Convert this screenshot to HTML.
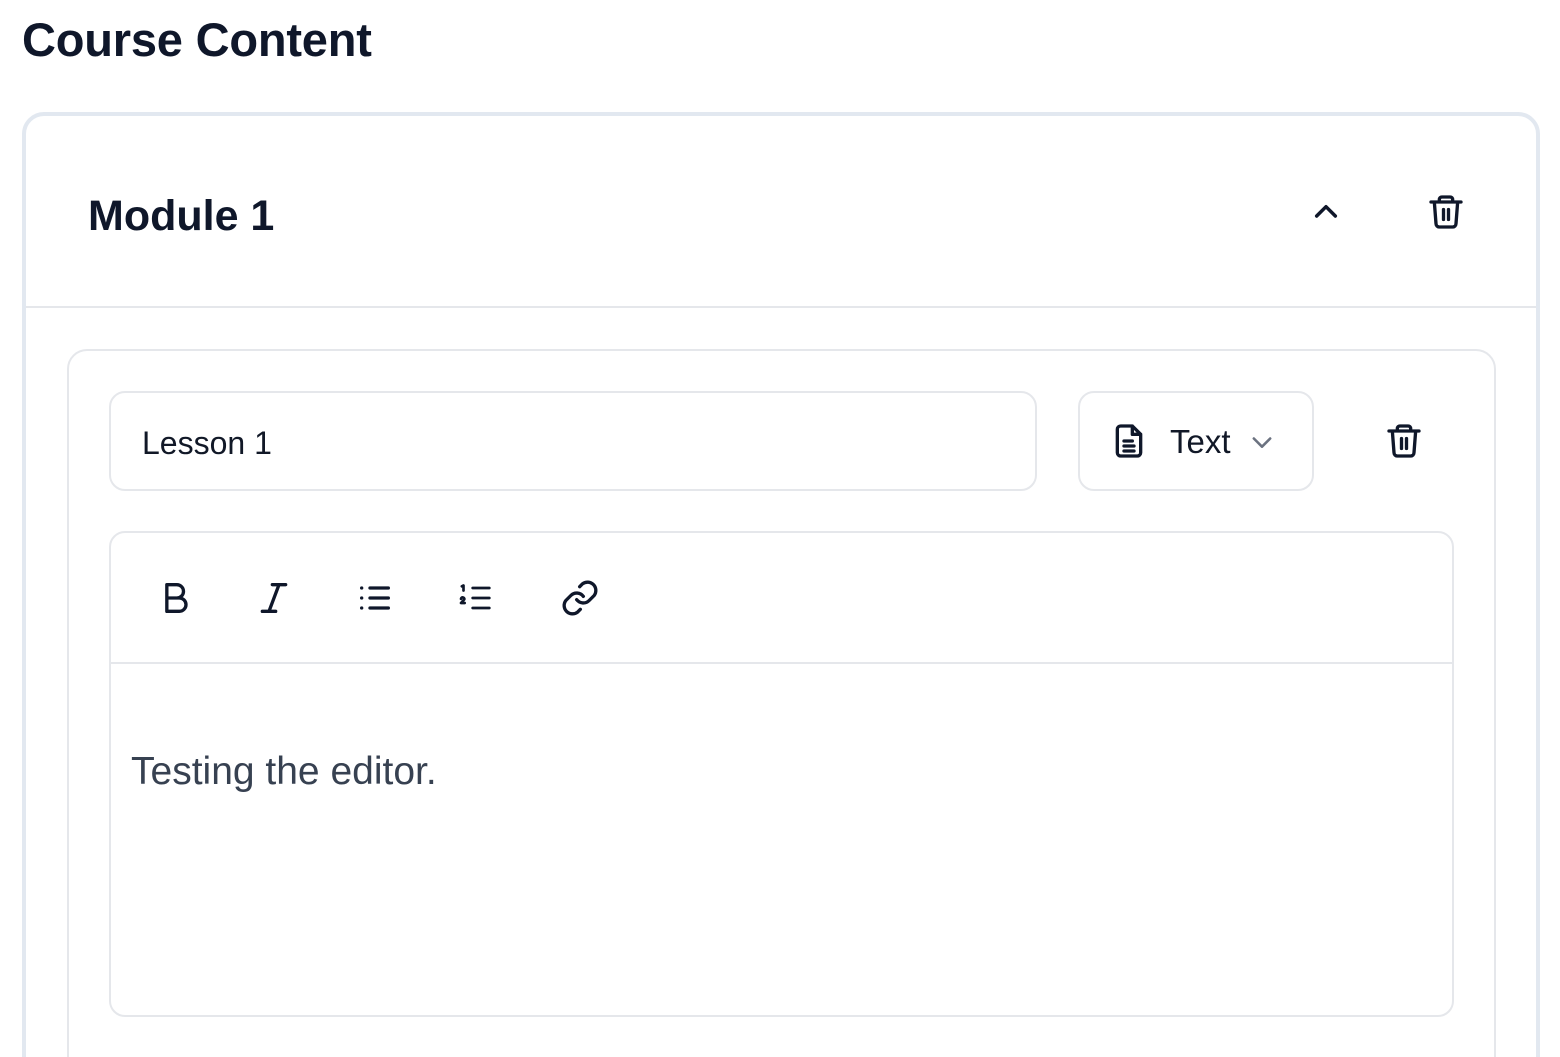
<!DOCTYPE html>
<html><head><meta charset="utf-8"><style>
*{box-sizing:border-box;margin:0;padding:0}
html,body{width:1560px;height:1057px;overflow:hidden}
body{background:#fff;font-family:"Liberation Sans",sans-serif;color:#0f172a;position:relative}
#wrap{position:absolute;left:0;top:0;width:1560px;height:1057px;overflow:hidden}
.abs{position:absolute}
h1{position:absolute;left:22px;top:12px;font-size:47px;font-weight:600;letter-spacing:-0.2px;line-height:56px}
.outer{left:22px;top:112px;width:1518px;height:1000px;border:4px solid #e2e8f0;border-radius:22px}
.mod{left:88px;top:190px;font-size:43px;font-weight:600;line-height:52px}
.div1{left:26px;top:306px;width:1510px;height:2px;background:#e5e7eb}
.lesson{left:67px;top:349px;width:1429px;height:760px;border:2px solid #e5e7eb;border-radius:20px}
.input{left:109px;top:391px;width:928px;height:100px;border:2px solid #e5e7eb;border-radius:16px;font-size:32px;line-height:100px;padding-left:31px;color:#111827}
.sel{left:1078px;top:391px;width:236px;height:100px;border:2px solid #e5e7eb;border-radius:16px}
.editor{left:109px;top:531px;width:1345px;height:486px;border:2px solid #e5e7eb;border-radius:16px}
.div2{left:111px;top:662px;width:1341px;height:2px;background:#e5e7eb}
.txt{left:131px;top:748px;font-size:39px;color:#374151;line-height:48px}
svg{position:absolute;fill:none;stroke:#0f172a;stroke-linecap:round;stroke-linejoin:round}
</style></head><body><div id="wrap">
<h1>Course Content</h1>
<div class="abs outer"></div>
<div class="abs mod">Module 1</div>
<svg style="left:1310px;top:196px" width="32" height="32" viewBox="0 0 24 24" stroke-width="2.6"><path d="M5 15l7-7 7 7"/></svg>
<svg style="left:1426px;top:192px" width="40" height="40" viewBox="0 0 24 24" stroke-width="2"><path d="M3 6h18M8 6V4.5A1.5 1.5 0 0 1 9.5 3h5A1.5 1.5 0 0 1 16 4.5V6M5 6l1 13a2 2 0 0 0 2 2h8a2 2 0 0 0 2-2l1-13M10.5 10.5v6M13.5 10.5v6"/></svg>
<div class="abs div1"></div>
<div class="abs lesson"></div>
<div class="abs input">Lesson 1</div>
<div class="abs sel"></div>
<svg style="left:1109px;top:421px" width="40" height="40" viewBox="0 0 24 24" stroke-width="2"><path d="M14 3H7a2 2 0 0 0-2 2v14a2 2 0 0 0 2 2h10a2 2 0 0 0 2-2V8z M14 3v5h5 M9 12h5 M9 15h6 M9 18h6"/></svg>
<div class="abs" style="left:1170px;top:420px;font-size:33px;line-height:44px;color:#111827">Text</div>
<svg style="left:1248px;top:428px" width="28" height="28" viewBox="0 0 24 24" stroke="#6b7280" stroke-width="2.2"><path d="M5 9l7 7 7-7" stroke="#6b7280"/></svg>
<svg style="left:1384px;top:421px" width="40" height="40" viewBox="0 0 24 24" stroke-width="2"><path d="M3 6h18M8 6V4.5A1.5 1.5 0 0 1 9.5 3h5A1.5 1.5 0 0 1 16 4.5V6M5 6l1 13a2 2 0 0 0 2 2h8a2 2 0 0 0 2-2l1-13M10.5 10.5v6M13.5 10.5v6"/></svg>
<div class="abs editor"></div>
<div class="abs div2"></div>
<svg style="left:156px;top:578px" width="40" height="40" viewBox="0 0 24 24" stroke-width="2"><path d="M6.5 4h6a4 4 0 0 1 0 8h-6zM6.5 12h7.5a4 4 0 0 1 0 8H6.5z"/></svg>
<svg style="left:254px;top:578px" width="40" height="40" viewBox="0 0 24 24" stroke-width="2"><path d="M11 4h8M5 20h8M15 4L9 20"/></svg>
<svg style="left:355px;top:578px" width="40" height="40" viewBox="0 0 24 24" stroke-width="2"><path d="M9 6h11M9 12h11M9 18h11M4 6h.01M4 12h.01M4 18h.01"/></svg>
<svg style="left:456px;top:578px" width="40" height="40" viewBox="0 0 24 24" stroke-width="2"><path d="M10 6h10M10 12h10M10 18h10M3.5 5l1-.5v3M3 12.5a1 1 0 0 1 2 .3L3 15h2.2" stroke-width="1.6"/></svg>
<svg style="left:560px;top:578px" width="40" height="40" viewBox="0 0 24 24" stroke-width="2"><path d="M10 13a5 5 0 0 0 7.5.5l3-3a5 5 0 0 0-7-7l-1.7 1.7M14 11a5 5 0 0 0-7.5-.5l-3 3a5 5 0 0 0 7 7l1.7-1.7"/></svg>
<div class="abs txt">Testing the editor.</div>
</div></body></html>
